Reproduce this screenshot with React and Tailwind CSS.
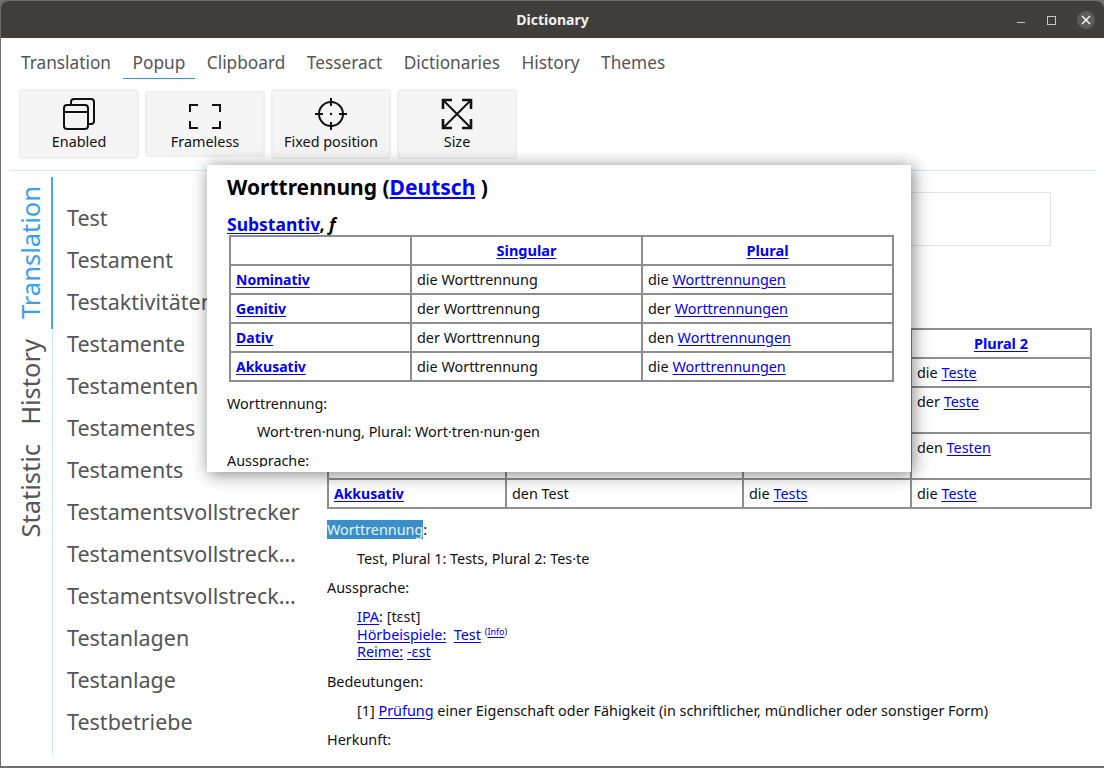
import React from 'react';

const FONT = "font-['Noto_Sans','Open_Sans',sans-serif]";

const TABS = ['Translation', 'Popup', 'Clipboard', 'Tesseract', 'Dictionaries', 'History', 'Themes'];

const WORDS = [
  'Test', 'Testament', 'Testaktivitäten', 'Testamente', 'Testamenten', 'Testamentes', 'Testaments',
  'Testamentsvollstrecker', 'Testamentsvollstreck…', 'Testamentsvollstreck…', 'Testanlagen', 'Testanlage', 'Testbetriebe',
];

const A = ({ children }) => <a className="text-[#0000ff] underline underline-offset-2">{children}</a>;

const EnabledIcon = () => (
  <svg width="34" height="34" viewBox="0 0 34 34" fill="none" stroke="#111" strokeWidth="2">
    <rect x="2" y="8" width="24" height="24" rx="3" />
    <path d="M2 15h24" />
    <path d="M9 8V5a3 3 0 0 1 3-3h17a3 3 0 0 1 3 3v19a3 3 0 0 1-3 3h-3" />
  </svg>
);

const FramelessIcon = () => (
  <svg width="34" height="34" viewBox="0 0 34 34" fill="none" stroke="#111" strokeWidth="2">
    <path d="M10 7H2v7M24 7h8v7M2 23v7h8M32 23v7h-8" />
  </svg>
);

const FixedIcon = () => (
  <svg width="34" height="34" viewBox="0 0 34 34" fill="none" stroke="#111" strokeWidth="2">
    <circle cx="17" cy="17" r="12" />
    <path d="M17 1v8M17 25v8M1 17h8M25 17h8" />
    <circle cx="17" cy="17" r="1.2" fill="#111" stroke="none" />
  </svg>
);

const SizeIcon = () => (
  <svg width="34" height="34" viewBox="0 0 34 34" fill="none" stroke="#111" strokeWidth="2">
    <path d="M4 4l26 26M30 4L4 30" />
    <path d="M12 3H3v9M22 3h9v9M3 22v9h9M31 22v9h-9" strokeWidth="2.6" />
  </svg>
);

const ToolButton = ({ icon, label, small }) => (
  <button className={`flex w-[120px] flex-col items-center rounded-[3px] border-2 border-[#efefef] bg-[#f5f5f5] ${small ? 'h-[66px] pt-[5px]' : 'h-[70px] pt-[6px]'}`}>
    {icon}
    <span className={`text-[14.4px] leading-[18px] text-[#111] ${small ? 'mt-[1px]' : 'mt-[2px]'}`}>{label}</span>
  </button>
);

const Th = ({ children }) => (
  <th className="border-2 border-[#8e8e8e] px-[5px] py-0 text-center text-[14.5px] font-bold"><A>{children}</A></th>
);

const Td = ({ children, bold }) => (
  <td className={`border-2 border-[#8e8e8e] px-[5px] pb-0 pt-[1px] align-top leading-[26px] ${bold ? 'text-[14px] font-bold' : ''}`}>{children}</td>
);

const PopupTable = () => (
  <table className="ml-[2px] w-[663px] table-fixed border-collapse text-[14.4px] text-[#111]">
    <colgroup>
      <col className="w-[181px]" />
      <col className="w-[231px]" />
      <col className="w-[251px]" />
    </colgroup>
    <tbody>
      <tr className="h-[29px]"><td className="border-2 border-[#8e8e8e]" /><Th>Singular</Th><Th>Plural</Th></tr>
      <tr className="h-[29px]"><Td bold><A>Nominativ</A></Td><Td>die Worttrennung</Td><Td>die <A>Worttrennungen</A></Td></tr>
      <tr className="h-[29px]"><Td bold><A>Genitiv</A></Td><Td>der Worttrennung</Td><Td>der <A>Worttrennungen</A></Td></tr>
      <tr className="h-[29px]"><Td bold><A>Dativ</A></Td><Td>der Worttrennung</Td><Td>den <A>Worttrennungen</A></Td></tr>
      <tr className="h-[29px]"><Td bold><A>Akkusativ</A></Td><Td>die Worttrennung</Td><Td>die <A>Worttrennungen</A></Td></tr>
    </tbody>
  </table>
);

const MainTable = () => (
  <table className="mt-[82px] w-[763px] table-fixed border-collapse text-[14.4px] text-[#111]">
    <colgroup>
      <col className="w-[178px]" />
      <col className="w-[237px]" />
      <col className="w-[168px]" />
      <col className="w-[180px]" />
    </colgroup>
    <tbody>
      <tr className="h-[29px]"><td className="border-2 border-[#8e8e8e]" /><Th>Singular</Th><Th>Plural 1</Th><Th>Plural 2</Th></tr>
      <tr className="h-[29px]"><Td bold><A>Nominativ</A></Td><Td>der Test</Td><Td>die <A>Tests</A></Td><Td>die <A>Teste</A></Td></tr>
      <tr className="h-[46px]"><Td bold><A>Genitiv</A></Td><Td>des Tests</Td><Td>der <A>Tests</A></Td><Td>der <A>Teste</A></Td></tr>
      <tr className="h-[46px]"><Td bold><A>Dativ</A></Td><Td>dem Test</Td><Td>den <A>Tests</A></Td><Td>den <A>Testen</A></Td></tr>
      <tr className="h-[29px]"><Td bold><A>Akkusativ</A></Td><Td>den Test</Td><Td>die <A>Tests</A></Td><Td>die <A>Teste</A></Td></tr>
    </tbody>
  </table>
);

const Popup = () => (
  <div className="absolute left-[207px] top-[165px] h-[307px] w-[704px] bg-white shadow-[2px_2px_16px_rgba(0,0,0,0.5)]">
    <div className="h-[302px] overflow-hidden pl-[20px] text-[14.4px] text-[#111]">
      <h1 className="pt-[8px] text-[21px] font-bold leading-[28px] text-black">Worttrennung (<A>Deutsch</A> )</h1>
      <h2 className="mt-[13px] text-[17.5px] font-bold leading-[21px] text-black"><A>Substantiv</A>, <i>f</i></h2>
      <PopupTable />
      <p className="mt-[13px] leading-[18px]">Worttrennung:</p>
      <p className="mt-[10px] pl-[30px] leading-[18px]">Wort·tren·nung, Plural: Wort·tren·nun·gen</p>
      <p className="mt-[11px] leading-[18px]">Aussprache:</p>
    </div>
  </div>
);

export default function App() {
  return (
    <div className={`relative flex h-[768px] w-[1104px] flex-col overflow-hidden bg-[#6e6e6e] pb-[2px] pl-[1px] pt-[1px] ${FONT}`}>
      {/* title bar */}
      <div className="relative flex h-[37px] shrink-0 items-center justify-center rounded-t-[8px] bg-[#403e3b]">
        <span className="text-[14px] font-bold text-[#f2f1f0]">Dictionary</span>
        <div className="absolute right-[9px] top-[10px] flex items-center">
          <div className="mr-[22px] mt-[4px] h-[1px] w-[8px] bg-[#c8c8c8]" />
          <div className="mr-[21px] h-[9px] w-[9px] border border-[#c8c8c8]" />
          <div className="flex h-[18px] w-[18px] items-center justify-center rounded-full bg-[#5e5c59]">
            <svg width="10" height="10" viewBox="0 0 10 10" stroke="#fff" strokeWidth="1.4"><path d="M1 1l8 8M9 1L1 9" /></svg>
          </div>
        </div>
      </div>

      <div className="flex min-h-0 flex-1 flex-col bg-white">
        {/* top tabs */}
        <div className="flex h-[41px] shrink-0 items-end gap-[1.5px] pl-[10px]">
          {TABS.map(tab => (
            <div key={tab} className={`flex h-[33px] items-center px-[10px] pt-[2px] text-[17.25px] text-[#555] ${tab === 'Popup' ? 'border-b border-[#2196f3]' : 'border-b border-transparent'}`}>
              {tab}
            </div>
          ))}
        </div>

        {/* toolbar */}
        <div className="flex h-[91px] shrink-0 items-center gap-[6px] pb-[1px] pl-[18px]">
          <ToolButton icon={<EnabledIcon />} label="Enabled" />
          <ToolButton icon={<FramelessIcon />} label="Frameless" small />
          <ToolButton icon={<FixedIcon />} label="Fixed position" />
          <ToolButton icon={<SizeIcon />} label="Size" />
        </div>

        <div className="mx-[9px] h-[1px] shrink-0 bg-[#cfe8fb]" />

        {/* body */}
        <div className="flex min-h-0 flex-1 pl-[9px]">
          <div className="mt-[6px] flex w-[43px] shrink-0 flex-col self-start border-r border-[#cfe8fb] text-[25.5px] leading-[42px] text-[#555]">
            <div className="-mr-[1px] flex h-[152px] items-center justify-center border-r-2 border-[#42a5f5] pr-[2px] text-[#3aa0f0]">
              <span className="rotate-180 [writing-mode:vertical-rl]">Translation</span>
            </div>
            <div className="flex h-[105px] items-center justify-center pr-[2px]">
              <span className="rotate-180 [writing-mode:vertical-rl]">History</span>
            </div>
            <div className="flex h-[322px] items-start justify-center pr-[2px] pt-[10px]">
              <span className="rotate-180 [writing-mode:vertical-rl]">Statistic</span>
            </div>
          </div>

          <div className="w-[267px] shrink-0 pl-[14px] pt-[26px] text-[21.5px] leading-[42px] text-[#555]">
            {WORDS.map((word, i) => (
              <div key={i} className="h-[42px] whitespace-nowrap">{word}</div>
            ))}
          </div>

          <div className="min-w-0 flex-1 overflow-hidden pl-[7px] pt-[21px] text-[14.4px] text-[#111]">
            <div className="ml-[1px] h-[54px] w-[723px] border border-[#e3e3e3]" />
            <MainTable />
            <p className="mt-[12px] leading-[18px]"><span className="bg-[#3a8fc9] text-[#e8f2fa]">Worttrennung</span>:</p>
            <p className="mt-[11px] pl-[30px] leading-[18px]">Test, Plural 1: Tests, Plural 2: Tes·te</p>
            <p className="mt-[11px] leading-[18px]">Aussprache:</p>
            <div className="mt-[11px] pl-[30px] leading-[17.5px]">
              <p><A>IPA</A>: [tɛst]</p>
              <p><A>Hörbeispiele:</A>&nbsp; <A>Test</A> <sup className="text-[9px]">(<A>Info</A>)</sup></p>
              <p><A>Reime:</A> <A>-ɛst</A></p>
            </div>
            <p className="mt-[12px] leading-[18px]">Bedeutungen:</p>
            <p className="mt-[11px] pl-[30px] leading-[18px]">[1] <A>Prüfung</A> einer Eigenschaft oder Fähigkeit (in schriftlicher, mündlicher oder sonstiger Form)</p>
            <p className="mt-[11px] leading-[18px]">Herkunft:</p>
          </div>
        </div>
      </div>

      <Popup />
    </div>
  );
}
